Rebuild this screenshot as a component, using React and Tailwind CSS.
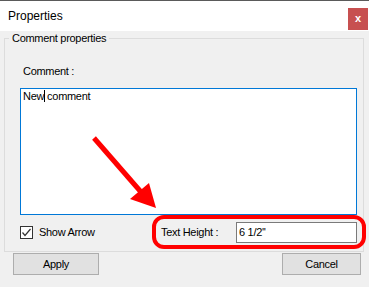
import React from 'react';

export default function App() {
  return (
    <div className="relative w-[369px] h-[287px] overflow-hidden bg-[#f0f0f0] border-t border-[#5a5a5a] font-['Liberation_Sans',Arial,sans-serif] text-black">
      <div className="h-[30px] bg-white flex items-start justify-between">
        <span className="ml-[8px] mt-[8px] text-[12px] leading-[14px]">Properties</span>
        <div className="mt-[7px] mr-[1px] w-[20px] h-[22px] bg-[#c75050] flex items-center justify-center text-white text-[11px] font-bold leading-none pb-[2px]">
          x
        </div>
      </div>

      <fieldset className="ml-[4px] w-[360px] border border-[#dcdcdc] pl-[15px] pr-[6px] pb-[2px] text-[11px] tracking-[-0.3px]">
        <legend className="-ml-[11px] px-[3px] leading-[14px]">Comment properties</legend>

        <div className="mt-[20px] ml-[3px] leading-[13px]">Comment :</div>

        <div className="mt-[10px] h-[127px] w-full bg-white border border-[#0078d7] pl-[2px] pt-[1px] leading-[13px]">
          New<span className="inline-block w-px h-[12px] bg-black align-[-2px] mr-[2px]" />comment
        </div>

        <div className="flex items-center">
          <label className="flex items-center">
            <span className="w-[13px] h-[13px] border border-[#333] bg-white flex items-center justify-center">
              <svg width="11" height="11" viewBox="0 0 11 11">
                <polyline points="1.5,5.5 4,8.5 9.5,2" fill="none" stroke="#333" strokeWidth="1.2" />
              </svg>
            </span>
            <span className="ml-[6px] leading-[13px]">Show Arrow</span>
          </label>
          <div className="ml-auto -mr-[9px] w-[214px] h-[34px] border-[4px] border-[#ff0000] rounded-[12px] flex items-center pl-[5px] pr-[5px]">
            <span className="leading-[13px]">Text Height :</span>
            <div className="ml-auto w-[121px] h-[21px] bg-white border border-[#7a7a7a] pl-[2px] flex items-center leading-[13px]">
              6 1/2''
            </div>
          </div>
        </div>
      </fieldset>

      <div className="mt-[1px] flex justify-between pl-[13px] pr-[8px] text-[11px] tracking-[-0.3px]">
        <button className="w-[86px] h-[22px] border border-[#adadad] bg-[#e1e1e1] leading-[13px]">Apply</button>
        <button className="w-[79px] h-[22px] border border-[#adadad] bg-[#e1e1e1] leading-[13px]">Cancel</button>
      </div>

      <svg className="absolute inset-0 pointer-events-none" width="369" height="287" viewBox="0 0 369 287">
        <line x1="94" y1="137" x2="141" y2="191" stroke="#ff0000" strokeWidth="5" />
        <polygon points="130,198 149,182 156,207" fill="#ff0000" />
      </svg>
    </div>
  );
}
